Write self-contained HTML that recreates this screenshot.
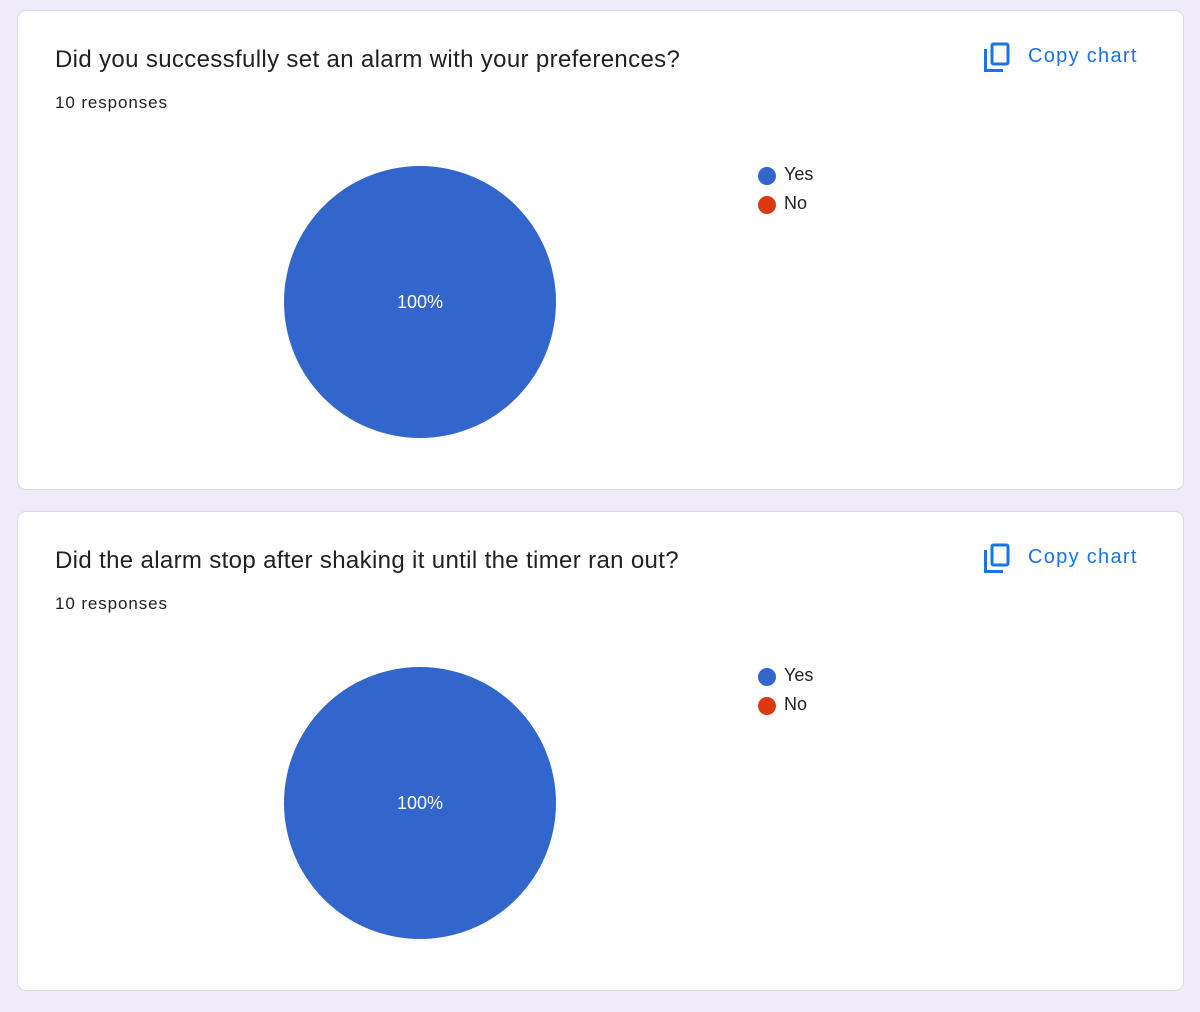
<!DOCTYPE html>
<html><head><meta charset="utf-8"><style>
html,body{margin:0;padding:0;background:#f0ebf8;width:1200px;height:1012px;overflow:hidden;font-family:"Liberation Sans",Arial,sans-serif;}
.card{position:absolute;left:17px;width:1167px;height:480px;background:#fff;border:1px solid #dadce0;border-radius:9px;box-sizing:border-box;}
.title{position:absolute;left:37px;top:35px;font-size:24px;color:#202124;letter-spacing:0.35px;white-space:nowrap;}
.resp{position:absolute;left:37px;top:82px;font-size:17px;color:#202124;letter-spacing:0.9px;}
.copy{position:absolute;left:965px;top:31px;height:32px;}
.copy span{position:absolute;left:45px;top:3px;font-size:20px;color:#1a73e8;white-space:nowrap;letter-spacing:1.3px;}
.pie{position:absolute;left:266px;top:155px;width:272px;height:272px;border-radius:50%;background:#3366cc;}
.pie span{position:absolute;left:0;right:0;top:126px;text-align:center;color:#fff;font-size:18px;}
.leg{position:absolute;left:740px;font-size:18px;color:#202124;}
.leg i{position:absolute;left:0;top:3px;width:18px;height:18px;border-radius:50%;}
.leg b{font-weight:normal;position:absolute;left:26px;top:0;}
</style></head><body>
<div class="card" style="top:10px">
<div class="title">Did you successfully set an alarm with your preferences?</div>
<div class="resp">10 responses</div>
<div class="copy"><svg width="28" height="32" viewBox="0 0 28 32" style="position:absolute;left:0;top:0"><rect x="9" y="2" width="16" height="20" rx="1.5" fill="none" stroke="#1a73e8" stroke-width="3"/><path d="M2.5 7 V28.5 H20" fill="none" stroke="#1a73e8" stroke-width="3"/></svg><span>Copy chart</span></div>
<div class="pie"><span>100%</span></div>
<div class="leg" style="top:153px"><i style="background:#3366cc"></i><b>Yes</b></div>
<div class="leg" style="top:182px"><i style="background:#dc3912"></i><b>No</b></div>
</div>
<div class="card" style="top:511px">
<div class="title">Did the alarm stop after shaking it until the timer ran out?</div>
<div class="resp">10 responses</div>
<div class="copy"><svg width="28" height="32" viewBox="0 0 28 32" style="position:absolute;left:0;top:0"><rect x="9" y="2" width="16" height="20" rx="1.5" fill="none" stroke="#1a73e8" stroke-width="3"/><path d="M2.5 7 V28.5 H20" fill="none" stroke="#1a73e8" stroke-width="3"/></svg><span>Copy chart</span></div>
<div class="pie"><span>100%</span></div>
<div class="leg" style="top:153px"><i style="background:#3366cc"></i><b>Yes</b></div>
<div class="leg" style="top:182px"><i style="background:#dc3912"></i><b>No</b></div>
</div>
</body></html>
